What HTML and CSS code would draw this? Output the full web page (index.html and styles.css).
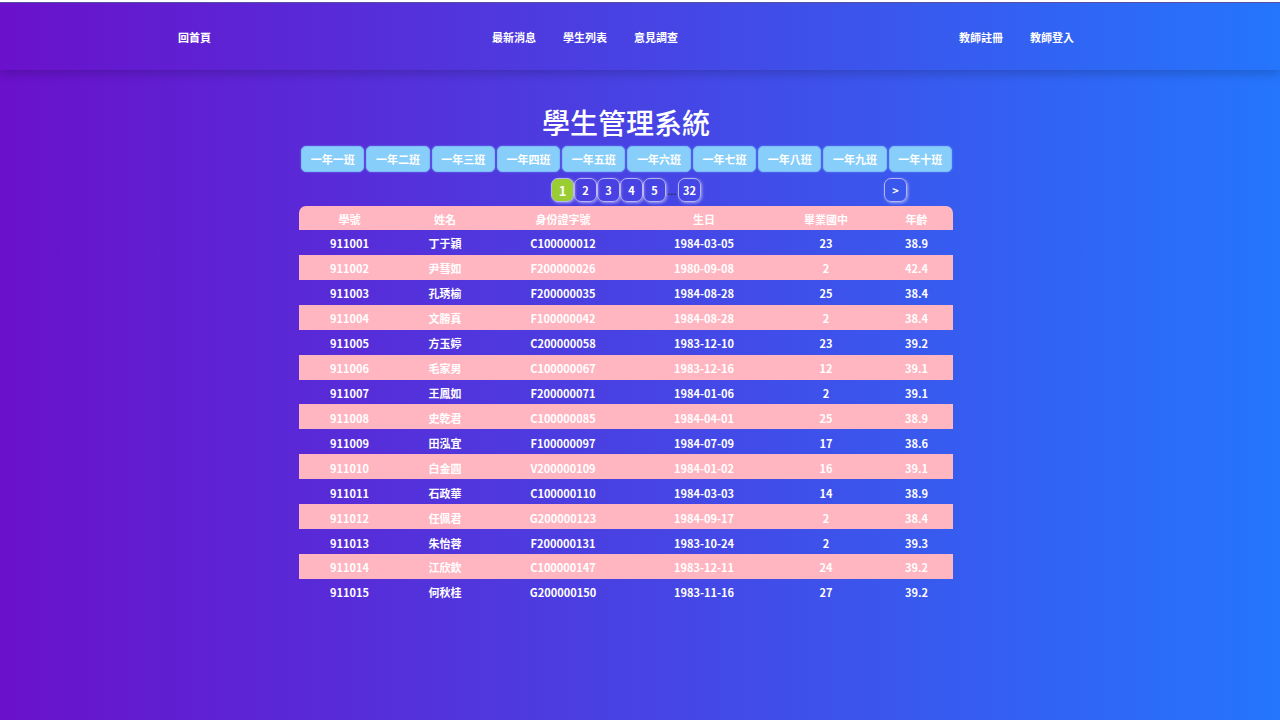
FILE: index.html
```html
<!DOCTYPE html>
<html lang="zh-Hant">
<head>
<meta charset="utf-8">
<meta name="viewport" content="width=device-width, initial-scale=1">
<title>學生管理系統</title>
<link rel="stylesheet" href="styles.css">
</head>
<body>
<header class="site-header">
  <nav class="nav">
    <div class="nav-group"><a href="#">回首頁</a></div>
    <div class="nav-group"><a href="#">最新消息</a><a href="#">學生列表</a><a href="#">意見調查</a></div>
    <div class="nav-group"><a href="#">教師註冊</a><a href="#">教師登入</a></div>
  </nav>
</header>
<main class="content">
  <h1 class="title">學生管理系統</h1>
  <div class="classes">
    <button type="button">一年一班</button>
    <button type="button">一年二班</button>
    <button type="button">一年三班</button>
    <button type="button">一年四班</button>
    <button type="button">一年五班</button>
    <button type="button">一年六班</button>
    <button type="button">一年七班</button>
    <button type="button">一年八班</button>
    <button type="button">一年九班</button>
    <button type="button">一年十班</button>
  </div>
  <nav class="pager" aria-label="分頁">
    <div class="pages">
      <a class="page current" href="#" aria-current="page">1</a>
      <a class="page" href="#">2</a>
      <a class="page" href="#">3</a>
      <a class="page" href="#">4</a>
      <a class="page" href="#">5</a>
      <span class="dots">...</span>
      <a class="page" href="#">32</a>
    </div>
    <a class="page next" href="#">&gt;</a>
  </nav>
  <table class="students">
    <colgroup>
      <col class="col-id"><col class="col-name"><col class="col-uid"><col class="col-birth"><col class="col-school"><col class="col-age">
    </colgroup>
    <thead>
      <tr><th>學號</th><th>姓名</th><th>身份證字號</th><th>生日</th><th>畢業國中</th><th>年齡</th></tr>
    </thead>
    <tbody>
      <tr><td>911001</td><td>丁于穎</td><td>C100000012</td><td>1984-03-05</td><td>23</td><td>38.9</td></tr>
      <tr><td>911002</td><td>尹彗如</td><td>F200000026</td><td>1980-09-08</td><td>2</td><td>42.4</td></tr>
      <tr><td>911003</td><td>孔琇榆</td><td>F200000035</td><td>1984-08-28</td><td>25</td><td>38.4</td></tr>
      <tr><td>911004</td><td>文勝真</td><td>F100000042</td><td>1984-08-28</td><td>2</td><td>38.4</td></tr>
      <tr><td>911005</td><td>方玉婷</td><td>C200000058</td><td>1983-12-10</td><td>23</td><td>39.2</td></tr>
      <tr><td>911006</td><td>毛家男</td><td>C100000067</td><td>1983-12-16</td><td>12</td><td>39.1</td></tr>
      <tr><td>911007</td><td>王鳳如</td><td>F200000071</td><td>1984-01-06</td><td>2</td><td>39.1</td></tr>
      <tr><td>911008</td><td>史乾君</td><td>C100000085</td><td>1984-04-01</td><td>25</td><td>38.9</td></tr>
      <tr><td>911009</td><td>田泓宜</td><td>F100000097</td><td>1984-07-09</td><td>17</td><td>38.6</td></tr>
      <tr><td>911010</td><td>白金圓</td><td>V200000109</td><td>1984-01-02</td><td>16</td><td>39.1</td></tr>
      <tr><td>911011</td><td>石政華</td><td>C100000110</td><td>1984-03-03</td><td>14</td><td>38.9</td></tr>
      <tr><td>911012</td><td>任佩君</td><td>G200000123</td><td>1984-09-17</td><td>2</td><td>38.4</td></tr>
      <tr><td>911013</td><td>朱怡蓉</td><td>F200000131</td><td>1983-10-24</td><td>2</td><td>39.3</td></tr>
      <tr><td>911014</td><td>江欣欽</td><td>C100000147</td><td>1983-12-11</td><td>24</td><td>39.2</td></tr>
      <tr><td>911015</td><td>何秋桂</td><td>G200000150</td><td>1983-11-16</td><td>27</td><td>39.2</td></tr>
    </tbody>
  </table>
</main>
</body>
</html>
```
FILE: styles.css
```css
* {
  box-sizing: border-box;
}

body {
  margin: 0;
  min-height: 100vh;
  border-top: 2px solid #fff;
  background: linear-gradient(to right, #6a11cb, #2575fc) border-box;
  color: #fff;
  font: bold 11px/16px "Noto Sans CJK TC", sans-serif;
}

a {
  color: inherit;
  text-decoration: none;
}

.site-header {
  padding: 26px 28px 25px 0;
  border-top: 1px solid #57509c;
  box-shadow: 0 3px 10px rgba(0, 0, 0, 0.2);
}

.nav {
  display: flex;
  justify-content: space-between;
  width: 896px;
  max-width: 90%;
  margin: 0 auto;
}

.nav-group {
  display: flex;
  gap: 27px;
}

.content {
  padding: 32px 28px 40px 0;
}

.title {
  margin: 0 0 4px;
  font-size: 28px;
  font-weight: 500;
  line-height: 40px;
  text-align: center;
}

.classes,
.pager,
.students {
  width: 654px;
  max-width: 100%;
  margin: 0 auto;
}

.classes {
  display: flex;
  gap: 2px;
  padding: 0 1px 0 2px;
}

.classes button {
  flex: 1;
  height: 26px;
  padding: 0;
  border: 1px solid #7cbcf8;
  border-radius: 5px;
  background: #87cefa;
  box-shadow: 0 0 2px rgba(135, 206, 250, 0.6);
  color: #fff;
  font: inherit;
}

.pager {
  display: grid;
  grid-template-columns: 1fr auto 1fr;
  padding: 6px 0 4px;
}

.pages {
  display: flex;
  grid-column: 2;
}

.page {
  width: 23px;
  height: 24px;
  border: 1px solid #b9b5f5;
  border-radius: 7px;
  box-shadow: 1px 1px 3px rgba(255, 255, 255, 0.5);
  line-height: 23px;
  text-align: center;
}

.current {
  background: #9acd32;
  font-size: 13px;
}

.dots {
  width: 12px;
  color: #212529;
  font-weight: 400;
  line-height: 24px;
  text-align: center;
}

.next {
  justify-self: end;
  margin-right: 46px;
}

.students {
  height: 398px;
  border-collapse: separate;
  border-spacing: 0;
  border-radius: 7px 7px 0 0;
  overflow: hidden;
  table-layout: fixed;
  text-align: center;
}

.students th,
.students td {
  padding: 5px 0 3px;
}

.students thead,
.students tbody tr:nth-child(even) {
  background: #ffb6c1;
}

.col-id {
  width: 101px;
}

.col-name {
  width: 90px;
}

.col-uid {
  width: 146px;
}

.col-birth {
  width: 136px;
}

.col-school {
  width: 108px;
}

.col-age {
  width: 73px;
}
```
